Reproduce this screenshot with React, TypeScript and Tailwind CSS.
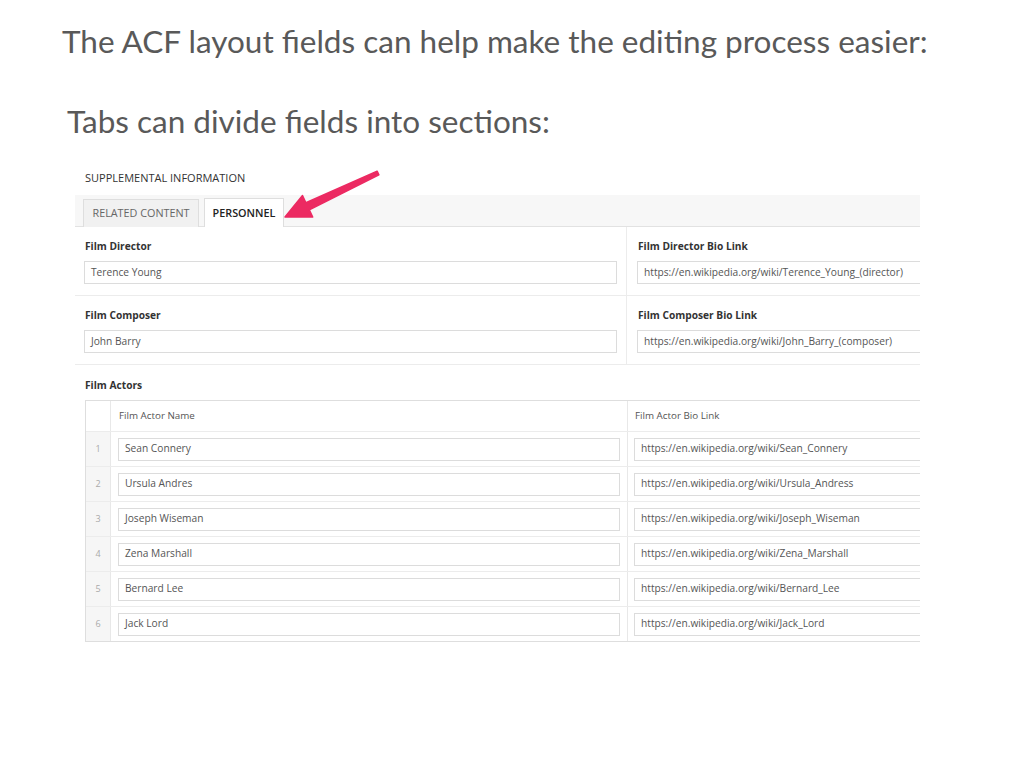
import React from 'react';

const actors = [
  { name: 'Sean Connery', link: 'https://en.wikipedia.org/wiki/Sean_Connery' },
  { name: 'Ursula Andres', link: 'https://en.wikipedia.org/wiki/Ursula_Andress' },
  { name: 'Joseph Wiseman', link: 'https://en.wikipedia.org/wiki/Joseph_Wiseman' },
  { name: 'Zena Marshall', link: 'https://en.wikipedia.org/wiki/Zena_Marshall' },
  { name: 'Bernard Lee', link: 'https://en.wikipedia.org/wiki/Bernard_Lee' },
  { name: 'Jack Lord', link: 'https://en.wikipedia.org/wiki/Jack_Lord' },
];

function Input({ value, cut }: { value: string; cut?: boolean }) {
  return (
    <div
      className={
        'h-[23px] flex items-center px-[6px] bg-white border border-[#dcdcdc] text-[10.2px] text-[#555] whitespace-nowrap overflow-hidden ' +
        (cut ? 'border-r-0' : '')
      }
    >
      {value}
    </div>
  );
}

function FieldRow({
  left,
  leftValue,
  right,
  rightValue,
}: {
  left: string;
  leftValue: string;
  right: string;
  rightValue: string;
}) {
  return (
    <div className="flex border-b border-[#ececec]">
      <div className="w-[552px] pt-[12px] pb-[11px] px-[9px] border-r border-[#ececec]">
        <div className="text-[10.2px] font-bold text-[#333] leading-[14px] mb-[8px] pl-[1px]">{left}</div>
        <Input value={leftValue} />
      </div>
      <div className="flex-1 pt-[12px] pb-[11px] pl-[10px]">
        <div className="text-[10.2px] font-bold text-[#333] leading-[14px] mb-[8px] pl-[1px]">{right}</div>
        <Input value={rightValue} cut />
      </div>
    </div>
  );
}

export default function App() {
  return (
    <div className="relative w-[1024px] h-[768px] bg-white overflow-hidden">
      <div className="pt-[21px] pl-[62px] text-[#595959]" style={{ fontFamily: 'Lato, "Open Sans", sans-serif' }}>
        <div className="text-[31.5px] leading-[40px]">The ACF layout fields can help make the editing process easier:</div>
        <div className="text-[31.5px] leading-[40px] mt-[40px] pl-[5px]">Tabs can divide fields into sections:</div>
      </div>

      <div
        className="ml-[75px] mt-[30px] w-[845px] overflow-hidden"
        style={{ fontFamily: '"Open Sans", "Noto Sans", sans-serif' }}
      >
        <div className="pl-[10px] text-[11px] text-[#333] leading-[14px] h-[24px]">
          SUPPLEMENTAL INFORMATION
        </div>
        {/* tab bar */}
        <div className="flex items-end h-[32px] bg-[#f7f7f7] border-b border-[#e2e2e2] pl-[8px] gap-[5px]">
          <div className="h-[28px] w-[116px] flex items-center justify-center bg-[#f1f1f1] border border-[#dedede] border-b-0 text-[10.8px] text-[#666] mb-[-1px]">
            RELATED CONTENT
          </div>
          <div className="h-[29px] w-[80px] flex items-center justify-center bg-white border border-[#dedede] border-b-0 text-[10.8px] font-semibold text-[#222] mb-[-1px]">
            PERSONNEL
          </div>
        </div>

        <FieldRow
          left="Film Director"
          leftValue="Terence Young"
          right="Film Director Bio Link"
          rightValue="https://en.wikipedia.org/wiki/Terence_Young_(director)"
        />
        <FieldRow
          left="Film Composer"
          leftValue="John Barry"
          right="Film Composer Bio Link"
          rightValue="https://en.wikipedia.org/wiki/John_Barry_(composer)"
        />

        <div className="pt-[13px] pl-[10px]">
          <div className="text-[10.2px] font-bold text-[#333] leading-[14px] mb-[8px]">Film Actors</div>
          <div className="border border-[#dedede] border-r-0">
            <div className="flex h-[30px] items-center text-[9.8px] text-[#555]">
              <div className="w-[25px] h-full border-r border-[#e8e8e8]" />
              <div className="w-[517px] h-full flex items-center pl-[8px] border-r border-[#e8e8e8]">Film Actor Name</div>
              <div className="flex-1 pl-[7px]">Film Actor Bio Link</div>
            </div>
            {actors.map((a, i) => (
              <div key={a.name} className="flex h-[35px] border-t border-[#ececec]">
                <div className="w-[25px] bg-[#f6f6f6] border-r border-[#e8e8e8] flex items-center justify-center text-[9px] text-[#aaa]">
                  {i + 1}
                </div>
                <div className="w-[517px] flex items-center px-[7px] border-r border-[#e8e8e8]">
                  <div className="flex-1">
                    <Input value={a.name} />
                  </div>
                </div>
                <div className="flex-1 flex items-center pl-[6px]">
                  <div className="flex-1">
                    <Input value={a.link} cut />
                  </div>
                </div>
              </div>
            ))}
          </div>
        </div>
      </div>

      {/* pink arrow */}
      <svg className="absolute left-0 top-0 pointer-events-none" width="1024" height="768" viewBox="0 0 1024 768">
        <polygon
          fill="#ec2a62"
          stroke="#ec2a62"
          strokeWidth="1.5"
          strokeLinejoin="round"
          points="377.1,171.2 378.9,174.8 309.3,209.9 312.7,217.1 285,217 302.5,195.5 305.9,202.7"
        />
      </svg>
    </div>
  );
}
